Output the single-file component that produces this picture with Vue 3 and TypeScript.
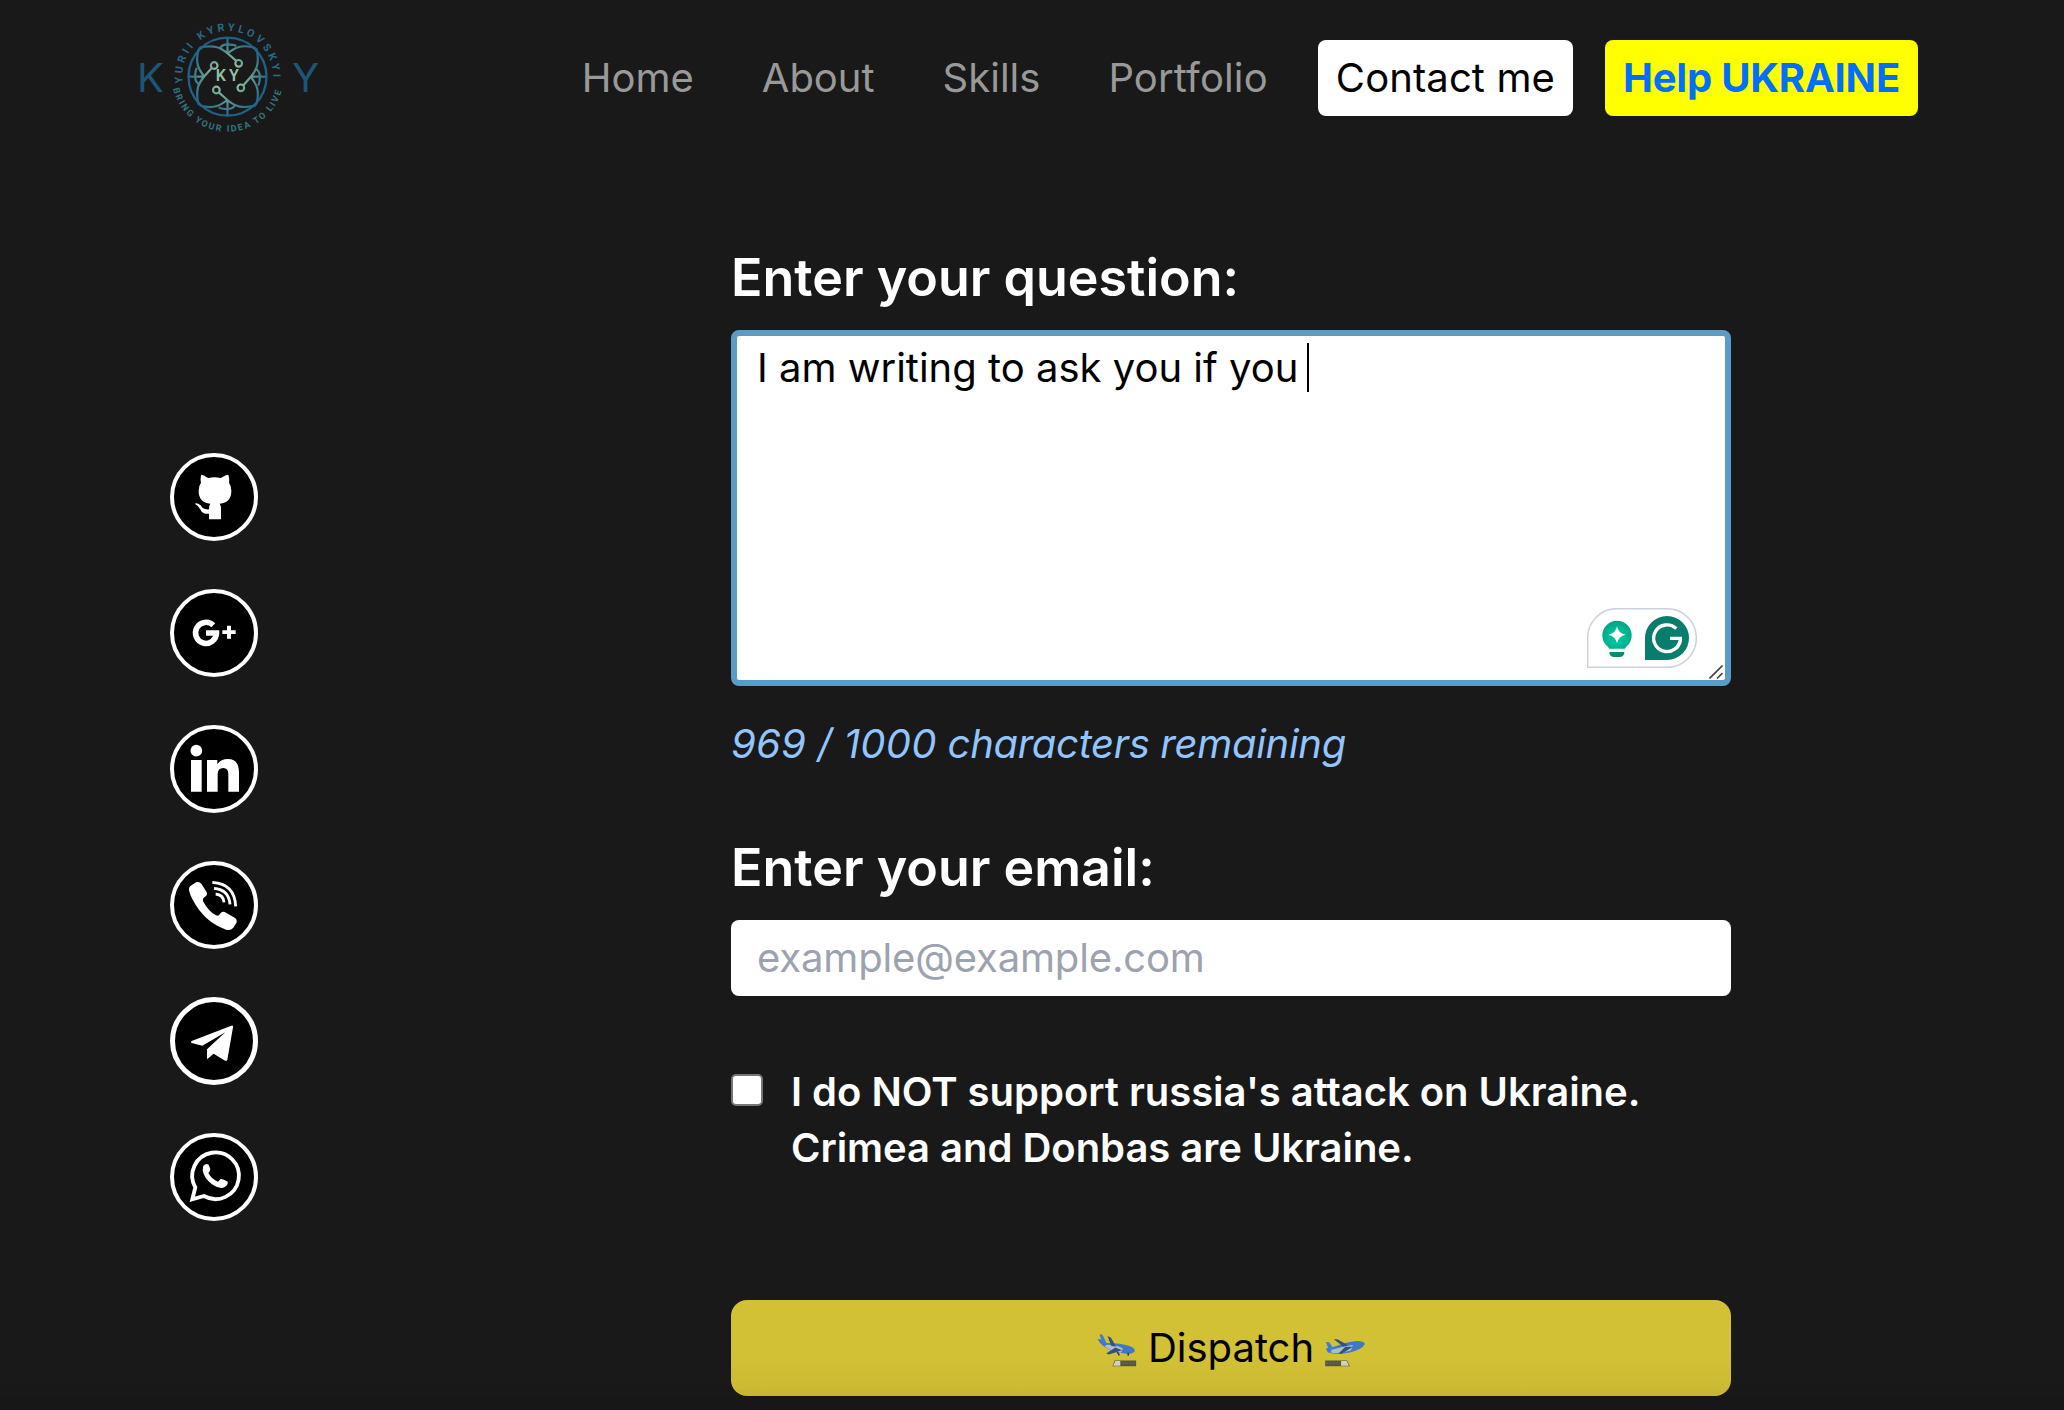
<script setup lang="ts">
import { computed, ref } from 'vue'

const links: string[] = ['Home', 'About', 'Skills', 'Portfolio']
const question = ref('I am writing to ask you if you ')
const email = ref('')
const agreed = ref(false)
const limit = 1000
const remaining = computed(() => limit - question.value.length)
const quarters = [0, 90, 180, 270]
</script>

<template>
  <div class="page">
    <header class="header">
      <a class="logo">
        <span class="initial">K</span>
        <svg class="emblem" viewBox="154 24 342 360" aria-hidden="true">
          <defs>
            <radialGradient id="glow" gradientUnits="userSpaceOnUse" cx="324" cy="200" r="122">
              <stop offset="0.3" stop-color="#8fc3a0" />
              <stop offset="0.65" stop-color="#568f8e" />
              <stop offset="1" stop-color="#205f87" />
            </radialGradient>
            <path id="arcTop" d="M189.500 219 A136 136 0 1 1 458.500 219" />
            <path id="arcBottom" d="M160.500 236 A168 168 0 0 0 487.500 236" />
          </defs>
          <circle cx="323.500" cy="200" r="117" fill="none" stroke="#205f87" stroke-width="7" />
          <g fill="none" stroke="url(#glow)" stroke-width="6.500">
            <g v-for="q in quarters" :key="q" :transform="`rotate(${q} 323.5 200)`">
              <path d="M323.500 84 V130 M240 113 C283 103 302 112 324 130 L349 152" />
              <path d="M324 130 C345 114 362 104 396 111 Q411 113 412 124" />
              <path d="M300 117 Q305 103 324 103 Q342 103 350 108" />
              <circle cx="357" cy="160" r="10" />
            </g>
          </g>
          <text class="mark" x="288 328" y="214">KY</text>
          <text class="ring-top"><textPath href="#arcTop" textLength="450" lengthAdjust="spacing">YURII KYRYLOVSKYI</textPath></text>
          <text class="ring-bottom"><textPath href="#arcBottom" textLength="442">BRING YOUR IDEA TO LIVE</textPath></text>
        </svg>
        <span class="initial">Y</span>
      </a>
      <nav class="nav">
        <a v-for="link in links" :key="link" class="item">{{ link }}</a>
        <a class="item contact">Contact me</a>
        <a class="item help">Help UKRAINE</a>
      </nav>
    </header>

    <main class="main">
      <aside class="social">
        <a class="round" aria-label="GitHub">
          <svg viewBox="0 0 264 264">
            <path d="M94 65 Q97 64 115 75 Q133 71 152 75 Q170 64 175 65 Q179 79 177 89 Q184 98 184 113 Q184 149 149 152 Q153 157 153 165 V199 H117 V182 Q99 184 93 173 Q87 158 74 152 Q83 147 93 158 Q101 171 117 169 Q117 156 121 152 Q86 149 86 113 Q86 98 93 89 Q90 77 94 65Z" />
          </svg>
        </a>
        <a class="round" aria-label="Google Plus">
          <svg viewBox="0 0 264 264">
            <path d="M130 109 A31.500 31.500 0 1 0 139.500 132 H108" fill="none" stroke="#fff" stroke-width="16.500" />
            <path d="M171 110 h12 v14 h14 v11 h-14 v14 h-12 v-14 h-14 v-11 h14z" />
          </svg>
        </a>
        <a class="round" aria-label="LinkedIn">
          <svg viewBox="0 0 264 264">
            <circle cx="79" cy="77" r="17.500" />
            <path d="M63 105 H95 V200 H63Z M111 105 H142 V118 Q152 102 174 102 Q207 102 207 143 V200 H175 V148 Q175 129 160 129 Q143 129 143 148 V200 H111Z" />
          </svg>
        </a>
        <a class="round" aria-label="Viber">
          <svg viewBox="0 0 264 264">
            <path d="M60 76 L78 64 Q88 60 95 70 L110 94 Q114 102 104 108 Q96 113 100 122 Q115 150 138 163 Q146 167 150 158 Q156 150 164 153 L194 170 Q203 176 199 186 L190 200 Q182 210 168 206 Q120 190 88 148 Q62 112 57 88 Q56 80 60 76Z" />
            <g fill="none" stroke="#fff" stroke-width="8.500">
              <path d="M127 64 Q194 68 197 136" />
              <path d="M132 82 Q177 86 180 130" />
              <path d="M137 99 Q160 101 162 124" />
            </g>
          </svg>
        </a>
        <a class="round thick" aria-label="Telegram">
          <svg viewBox="0 0 264 264">
            <path d="M65 132 L184 86 Q190 84 189 91 L172 188 Q170 194 163 190 L131 170 L111 187 V157 L166 106 L97 146 L65 138 Q60 135 65 132Z" />
          </svg>
        </a>
        <a class="round" aria-label="WhatsApp">
          <svg viewBox="0 0 264 264">
            <path d="M67 199 L76 163 A70 70 0 1 1 102 189 Z" fill="none" stroke="#fff" stroke-width="11.500" />
            <path d="M100 98 Q108 90 116 95 L121 108 Q121 114 115 120 Q126 140 144 146 L152 138 Q158 137 173 146 Q175 156 164 162 Q150 170 126 154 Q102 136 98 112Z" />
          </svg>
        </a>
      </aside>

      <form class="form" @submit.prevent>
        <label class="title" for="question">Enter your question:</label>
        <div class="area">
          <textarea id="question" v-model="question" class="field question" spellcheck="false"></textarea>
          <span class="caret"></span>
          <svg class="assistant" viewBox="0 0 330 180" aria-hidden="true">
            <path d="M2 178 V89 A87 87 0 0 1 89 2 H240 A88 88 0 0 1 240 178Z" fill="#fff" stroke="#cdd0e0" stroke-width="4.500" />
            <defs>
              <radialGradient id="bulb" cx="0.500" cy="0.600" r="0.600">
                <stop offset="0" stop-color="#00c9a0" />
                <stop offset="0.500" stop-color="#00bd96" />
                <stop offset="1" stop-color="#0a9f83" />
              </radialGradient>
            </defs>
            <path d="M66 122 Q65 117 56 110 A44 44 0 1 1 124 110 Q115 117 114 122Z" fill="url(#bulb)" />
            <path d="M90 55 Q94 76 115 80 Q94 85 90 106 Q86 85 65 80 Q86 76 90 55Z" fill="#fff" />
            <path d="M67 132 H112 Q112 147 97 147 H82 Q67 147 67 132Z" fill="#078a70" />
            <path d="M174 156 V90 A66 66 0 1 1 240 156Z" fill="#087d6d" />
            <path d="M268 62 A40 40 0 1 0 280 91 H249 M280 91 V96 Q280 107 268 121" fill="none" stroke="#fff" stroke-width="10" />
          </svg>
          <svg class="grip" viewBox="0 0 14 14" aria-hidden="true">
            <path d="M0.500 13.500 L13.500 0.500 M8 13.500 L13.500 8" stroke="#444" stroke-width="1.600" />
          </svg>
        </div>
        <p class="counter"><span class="count">{{ remaining }} / {{ limit }}</span> characters remaining</p>
        <label class="title" for="email">Enter your email:</label>
        <input id="email" v-model="email" class="field email" type="email" placeholder="example@example.com" />
        <label class="agree">
          <input v-model="agreed" class="box" type="checkbox" />
          <span>I do NOT support russia's attack on Ukraine.<br />Crimea and Donbas are Ukraine.</span>
        </label>
        <button class="dispatch" type="submit">
          <svg class="plane" viewBox="0 0 120 100" aria-hidden="true">
            <path d="M46 98 L53 80 H118 V98Z" fill="#55554c" />
            <path d="M48 96 L55 82 H70 V96Z" fill="#d5d3bd" />
            <path d="M76 88 H116" stroke="#7d7b6c" stroke-width="2" stroke-dasharray="6 4" />
            <path d="M1 15 L12 17 L27 27 Q70 27 98 36 Q114 41 114 52 Q106 62 84 59 Q35 56 10 29Z" fill="#3f78c4" />
            <path d="M7 1 L16 2 L30 31 L16 30Z" fill="#3f7bd8" />
            <path d="M28 33 Q55 32 78 44 L72 57 Q45 54 22 38Z" fill="#a8bfc4" />
            <path d="M31 6 L42 11 L57 38 L43 36Z" fill="#34517e" />
            <path d="M55 41 L27 59 L36 62 L75 49Z" fill="#34517e" />
            <path d="M94 57 V66 M61 54 L67 65" stroke="#34405a" stroke-width="5" />
          </svg>
          <span>Dispatch</span>
          <svg class="plane" viewBox="0 0 120 100" aria-hidden="true">
            <path d="M0 80 H66 L75 98 H0Z" fill="#55554c" />
            <path d="M48 82 H65 L72 96 H48Z" fill="#d5d3bd" />
            <path d="M3 88 H45" stroke="#7d7b6c" stroke-width="2" stroke-dasharray="6 4" />
            <path d="M2 44 L20 41 Q85 18 105 22 Q121 24 120 31 Q111 47 75 56 Q35 64 8 56Z" fill="#3f78c4" />
            <path d="M2 24 L12 25 L27 46 L12 51Z" fill="#3f7bd8" />
            <path d="M20 48 Q55 36 84 33 L78 50 Q45 61 16 56Z" fill="#a8bfc4" />
            <path d="M26 16 L37 16 L68 33 L55 39Z" fill="#34517e" />
            <path d="M61 39 L40 60 L50 60 L84 39Z" fill="#34517e" />
          </svg>
        </button>
      </form>
    </main>
    <div class="shade"></div>
  </div>
</template>

<style>
body {
  background: #191919;
  overflow: hidden;
}
</style>

<style scoped>
.page {
  position: relative;
  box-sizing: border-box;
  height: 1410px;
  overflow: hidden;
  background: #191919;
  color: #fff;
  font-family: Inter, sans-serif;
  font-size: 40px;
  line-height: 56px;
}
.header {
  display: flex;
  align-items: flex-start;
  justify-content: space-between;
  height: 156px;
  padding: 0 146px 0 137px;
}
.logo {
  display: flex;
  align-items: flex-start;
  padding-top: 18px;
}
.initial {
  padding-top: 32px;
  color: #1d5575;
  font-weight: 400;
}
.initial:first-child {
  width: 34px;
}
.initial:last-child {
  padding-left: 7px;
}
.emblem {
  width: 114px;
  height: 120px;
  overflow: visible;
}
.mark {
  fill: #8fc3a0;
  font: 600 48px Roboto, sans-serif;
}
.ring-top {
  fill: #286a85;
  font: 700 32px Roboto, sans-serif;
}
.ring-bottom {
  fill: #33767f;
  font: 700 27px Roboto, sans-serif;
}
.nav {
  display: flex;
  gap: 32px;
  padding-top: 40px;
}
.item {
  padding: 10px 18px;
  border-radius: 8px;
  color: #999;
  white-space: nowrap;
}
.contact {
  background: #fff;
  color: #000;
  letter-spacing: 0.1px;
}
.help {
  background: #ff0;
  color: #006fff;
  font-weight: 700;
  letter-spacing: -0.2px;
}
.item:nth-child(4) {
  letter-spacing: 0.15px;
}
.main {
  display: flex;
}
.social {
  display: flex;
  flex-direction: column;
  gap: 48px;
  width: 561px;
  padding: 297px 0 0 170px;
}
.round {
  display: flex;
  box-sizing: border-box;
  width: 88px;
  height: 88px;
  border: 4px solid #fff;
  border-radius: 50%;
  background: #000;
}
.round.thick {
  border-width: 5.5px;
}
.round svg {
  flex: none;
  width: 88px;
  height: 88px;
  margin: -4px;
  fill: #fff;
}
.round.thick svg {
  margin: -5px;
}
.form {
  display: flex;
  flex-direction: column;
  width: 1000px;
  padding-top: 86px;
}
.title {
  height: 88px;
  font-size: 52px;
  font-weight: 600;
  line-height: 72px;
}
.area {
  position: relative;
  height: 356px;
}
.field {
  display: block;
  box-sizing: border-box;
  width: 100%;
  margin: 0;
  border: 0;
  border-radius: 8px;
  outline: none;
  background: #fff;
  color: #000;
  font: inherit;
}
.question {
  height: 356px;
  padding: 4px 20px;
  border: 6px solid #5a9cc5;
  resize: none;
}
.caret {
  position: absolute;
  top: 13px;
  left: 576px;
  width: 2px;
  height: 49px;
  background: #000;
}
.assistant {
  position: absolute;
  right: 34px;
  bottom: 18px;
  width: 110px;
  height: 60px;
}
.grip {
  position: absolute;
  right: 8px;
  bottom: 7px;
  width: 14px;
  height: 14px;
}
.counter {
  margin: 30px 0 60px;
  color: #93c5fd;
  font-style: italic;
  letter-spacing: -0.3px;
}
.count {
  letter-spacing: 0.25px;
}
.title + .email {
  height: 76px;
  padding: 9px 26px 11px;
}
.email::placeholder {
  color: #9ca3af;
  letter-spacing: -0.15px;
  opacity: 1;
}
.agree {
  display: flex;
  align-items: flex-start;
  gap: 28px;
  margin-top: 68px;
  font-weight: 600;
  letter-spacing: -0.03px;
}
.box {
  flex: none;
  appearance: none;
  box-sizing: border-box;
  width: 32px;
  height: 32px;
  margin: 10px 0 0;
  border: 2px solid #767676;
  border-radius: 5px;
  background: #fff;
}
.dispatch {
  display: flex;
  align-items: center;
  justify-content: center;
  gap: 11px;
  height: 96px;
  margin-top: 124px;
  padding: 0;
  border: 0;
  border-radius: 16px;
  background: #d2c035;
  color: #000;
  font: inherit;
}
.plane {
  width: 40px;
  height: 33px;
  margin-top: 5px;
}
.shade {
  position: absolute;
  right: 0;
  bottom: 0;
  left: 0;
  height: 54px;
  background: linear-gradient(rgba(0, 0, 0, 0), rgba(0, 0, 0, 0.03) 60%, rgba(0, 0, 0, 0.12));
  pointer-events: none;
}
</style>
